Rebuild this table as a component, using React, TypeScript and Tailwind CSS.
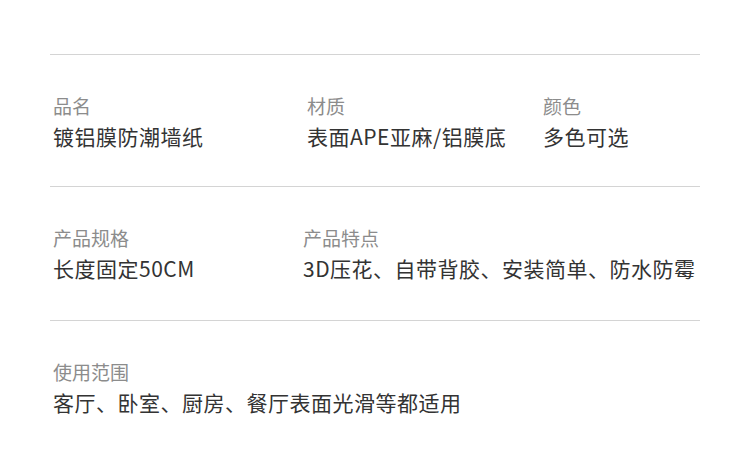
const rows = [
  {
    pb: "pb-[36px]",
    cols: [
      { label: "品名", value: "镀铝膜防潮墙纸", w: "w-[254px]" },
      { label: "材质", value: "表面APE亚麻/铝膜底", w: "w-[236px]" },
      { label: "颜色", value: "多色可选", w: "" },
    ],
  },
  {
    pb: "pb-[38px]",
    cols: [
      { label: "产品规格", value: "长度固定50CM", w: "w-[250px]" },
      { label: "产品特点", value: "3D压花、自带背胶、安装简单、防水防霉", w: "" },
    ],
  },
  {
    pb: "pb-[36px]",
    cols: [{ label: "使用范围", value: "客厅、卧室、厨房、餐厅表面光滑等都适用", w: "" }],
  },
];

export default function App() {
  return (
    <div
      className="w-[750px] h-[474px] bg-white pt-[54px] pl-[50px]"
      style={{ fontFamily: '"Noto Sans CJK SC", "Noto Sans", sans-serif' }}
    >
      <div className="w-[650px]">
        {rows.map((row, i) => (
          <div key={i} className={`border-t border-[#d4d4d4] pt-[39px] ${row.pb} flex`}>
            {row.cols.map((c) => (
              <div key={c.label} className={`${c.w} pl-[3px] flex flex-col gap-[4px]`}>
                <p className="text-[19px] leading-[24px] text-[#8c8c8c]">{c.label}</p>
                <p className="text-[21px] leading-[28px] tracking-[0.5px] text-[#333333]">{c.value}</p>
              </div>
            ))}
          </div>
        ))}
      </div>
    </div>
  );
}
